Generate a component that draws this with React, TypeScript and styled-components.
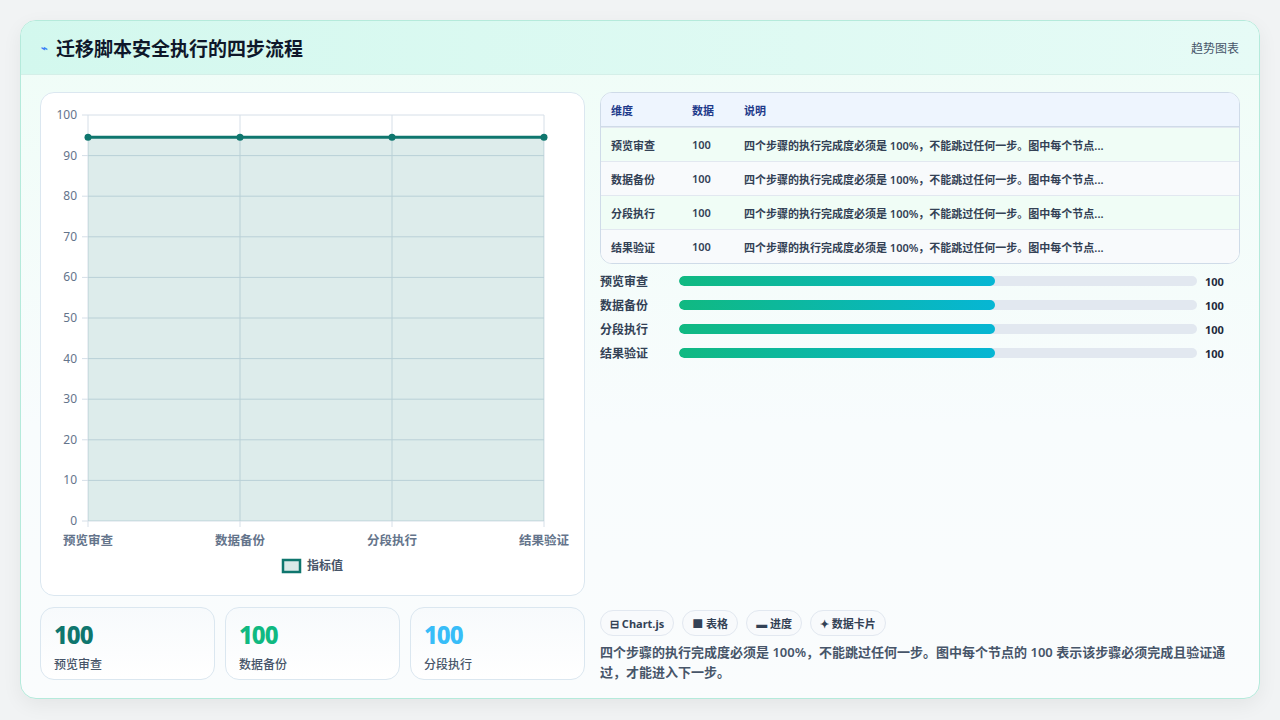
import React from "react";
import styled, { createGlobalStyle } from "styled-components";

const G = createGlobalStyle`
  html,body{margin:0;padding:0;background:#f1f3f4;}
  body{font-family:"Noto Sans","Noto Sans CJK SC",sans-serif;width:1280px;height:720px;overflow:hidden;}
`;
const Page = styled.div`padding:20px 20px 0 20px;`;
const Card = styled.div`
  height:679px;box-sizing:border-box;border:1px solid #b5eadb;border-radius:16px;
  background:linear-gradient(180deg,#effdf7 0%,#f8fcfd 60%,#fafcfd 100%);
  overflow:hidden;display:flex;flex-direction:column;box-shadow:0 6px 20px rgba(0,0,0,0.06);
`;
const Header = styled.div`
  height:55px;box-sizing:border-box;display:flex;align-items:center;justify-content:space-between;
  padding:0 20px;background:linear-gradient(90deg,#d3f8ee,#e6fbf6);border-bottom:1px solid #d4efe8;
`;
const Title = styled.div`display:flex;align-items:center;gap:8px;font-size:19px;font-weight:700;color:#0f172a;`;
const Bolt = styled.span`color:#3b82f6;font-size:11px;`;
const Tag = styled.div`font-size:12px;color:#475569;`;
const Body = styled.div`flex:1;display:grid;grid-template-columns:545px 640px;gap:15px;padding:17px 19px 18px 19px;`;
const Col = styled.div`display:flex;flex-direction:column;gap:11px;`;
const ChartCard = styled.div`height:504px;box-sizing:border-box;border:1px solid #dbe7f0;border-radius:14px;background:#fff;`;
const Stats = styled.div`display:grid;grid-template-columns:repeat(3,1fr);gap:10px;`;
const Stat = styled.div`height:73px;box-sizing:border-box;border:1px solid #dbe7f0;border-radius:14px;background:linear-gradient(180deg,#f7fafc,#fff);padding:12px 13px;`;
const StatNum = styled.div<{ c: string }>`font-size:24px;font-weight:800;color:${p => p.c};line-height:30px;letter-spacing:-1px;`;
const StatLbl = styled.div`font-size:12px;color:#475569;margin-top:5px;font-weight:500;`;
const Table = styled.div`border:1px solid #cfdbe8;border-radius:12px;overflow:hidden;background:#fff;`;
const Row = styled.div<{ bg: string; head?: boolean }>`
  display:grid;grid-template-columns:81px 52px 1fr;height:33px;align-items:center;padding-left:10px;
  background:${p => p.bg};font-size:11px;font-weight:600;color:${p => (p.head ? "#1e3a8a" : "#334155")};
  border-top:${p => (p.head ? "none" : "1px solid #e2e8f0")};
  ${p => p.head && "border-bottom:1px solid #cfdbe8;"}
`;
const Bars = styled.div`display:flex;flex-direction:column;gap:10px;margin-top:8px;`;
const BarRow = styled.div`display:grid;grid-template-columns:79px 518px 1fr;align-items:center;height:14px;font-size:12px;font-weight:600;color:#334155;`;
const Track = styled.div`height:10px;border-radius:5px;background:#e2e8f0;overflow:hidden;`;
const Fill = styled.div`height:100%;border-radius:5px;background:linear-gradient(90deg,#10b981,#06b6d4);`;
const Val = styled.div`font-size:11px;font-weight:700;color:#1e293b;padding-left:8px;`;
const Spacer = styled.div`flex:1;`;
const Chips = styled.div`display:flex;gap:8px;`;
const Chip = styled.div`height:26px;box-sizing:border-box;padding:0 9px;border:1px solid #e2e8f0;border-radius:13px;background:#f8fafc;display:flex;align-items:center;gap:4px;font-size:11px;font-weight:700;color:#334155;`;
const Para = styled.div`font-size:13px;font-weight:600;color:#475569;line-height:20px;margin-top:6px;margin-bottom:-2px;`;

const labels = ["预览审查", "数据备份", "分段执行", "结果验证"];
const desc = "四个步骤的执行完成度必须是 100%，不能跳过任何一步。图中每个节点...";

function Chart() {
  const x0 = 47, x1 = 503, y0 = 22, y1 = 428;
  const ys = Array.from({ length: 11 }, (_, i) => i * 10);
  const xs = [0, 1, 2, 3].map(i => x0 + (i * (x1 - x0)) / 3);
  const py = y1 - 0.945 * (y1 - y0);
  return (
    <svg width="543" height="502" viewBox="0 0 543 502">
      {ys.map(v => {
        const y = y1 - (v / 100) * (y1 - y0);
        return (
          <g key={v}>
            <line x1={x0 - 6} x2={x1} y1={y} y2={y} stroke="#d6dfe8" />
            <text x={36} y={y + 4} textAnchor="end" fontSize="12" fill="#64748b">{v}</text>
          </g>
        );
      })}
      {xs.map((x, i) => (
        <g key={i}>
          <line x1={x} x2={x} y1={y0} y2={y1 + 6} stroke="#d6dfe8" />
          <text x={x} y={452} textAnchor="middle" fontSize="12.5" fontWeight="600" fill="#64748b">{labels[i]}</text>
        </g>
      ))}
      <rect x={x0} y={py} width={x1 - x0} height={y1 - py} fill="#0f766e" opacity="0.14" />
      <line x1={x0} x2={x1} y1={py} y2={py} stroke="#0f766e" strokeWidth="3" />
      {xs.map((x, i) => <circle key={i} cx={x} cy={py} r="3.5" fill="#0f766e" />)}
      <rect x={242} y={467} width={17} height={12} fill="#dbe9e8" stroke="#0f766e" strokeWidth="2.5" />
      <text x={266} y={477} fontSize="12" fontWeight="600" fill="#475569">指标值</text>
    </svg>
  );
}

export default function App() {
  return (
    <Page>
      <G />
      <Card>
        <Header>
          <Title><Bolt>⌁</Bolt>迁移脚本安全执行的四步流程</Title>
          <Tag>趋势图表</Tag>
        </Header>
        <Body>
          <Col>
            <ChartCard><Chart /></ChartCard>
            <Stats>
              <Stat><StatNum c="#0f766e">100</StatNum><StatLbl>预览审查</StatLbl></Stat>
              <Stat><StatNum c="#10b981">100</StatNum><StatLbl>数据备份</StatLbl></Stat>
              <Stat><StatNum c="#38bdf8">100</StatNum><StatLbl>分段执行</StatLbl></Stat>
            </Stats>
          </Col>
          <Col style={{ gap: 0 }}>
            <Table>
              <Row bg="#eef5fe" head><span>维度</span><span>数据</span><span>说明</span></Row>
              {labels.map((l, i) => (
                <Row key={l} bg={i % 2 ? "#f8fafc" : "#f0fdf6"}><span>{l}</span><span>100</span><span>{desc}</span></Row>
              ))}
            </Table>
            <Bars>
              {labels.map(l => (
                <BarRow key={l}><span>{l}</span><Track><Fill style={{ width: "61%" }} /></Track><Val>100</Val></BarRow>
              ))}
            </Bars>
            <Spacer />
            <Chips>
              <Chip>⊟ Chart.js</Chip>
              <Chip>■ 表格</Chip>
              <Chip>▬ 进度</Chip>
              <Chip>✦ 数据卡片</Chip>
            </Chips>
            <Para>四个步骤的执行完成度必须是 100%，不能跳过任何一步。图中每个节点的 100 表示该步骤必须完成且验证通过，才能进入下一步。</Para>
          </Col>
        </Body>
      </Card>
    </Page>
  );
}
